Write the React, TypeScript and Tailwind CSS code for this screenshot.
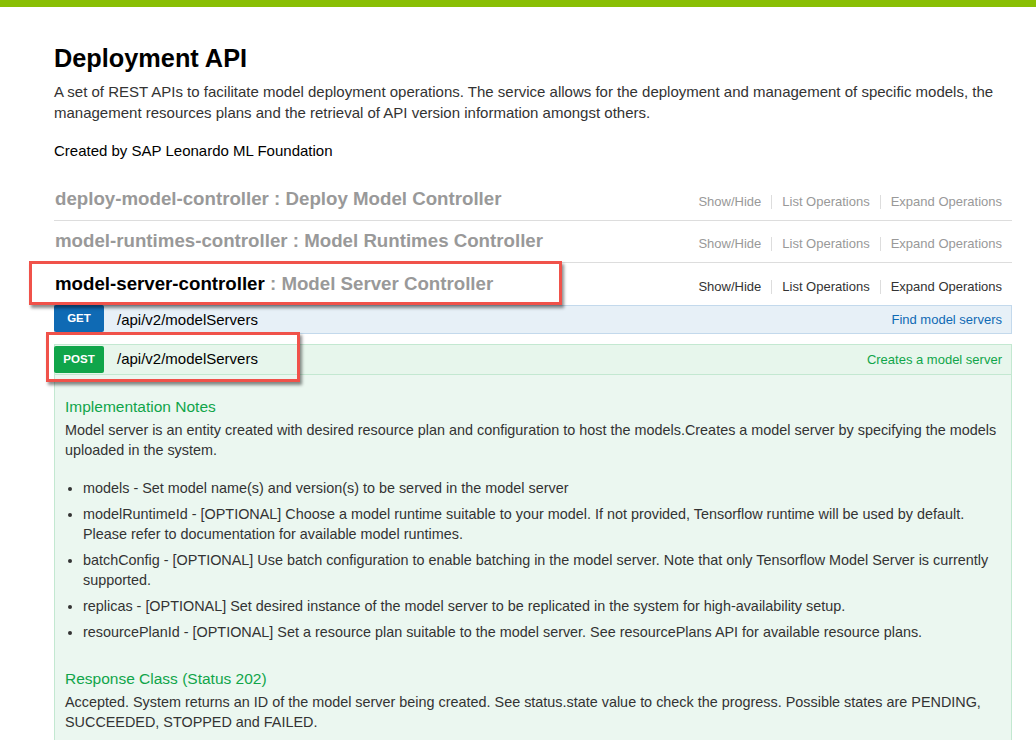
import React from "react";

const font = { fontFamily: '"Liberation Sans", Arial, Helvetica, sans-serif' };

function Links({ active }: { active?: boolean }) {
  const c = active ? "text-[#333]" : "text-[#999]";
  return (
    <div className={`flex items-center mt-[5px] text-[13px] pr-[10px] ${c}`}>
      <span className="px-[10px]">Show/Hide</span>
      <span className="w-px h-[14px] bg-[#ddd]" />
      <span className="px-[10px]">List Operations</span>
      <span className="w-px h-[14px] bg-[#ddd]" />
      <span className="pl-[10px]">Expand Operations</span>
    </div>
  );
}

function Controller({ name, desc, active, border = true }: { name: string; desc: string; active?: boolean; border?: boolean }) {
  return (
    <div className={`flex items-center justify-between h-[42px] ${border ? "border-b border-[#ddd]" : ""}`}>
      <div className="text-[18.7px] font-bold pl-px">
        <span className={active ? "text-black" : "text-[#999]"}>{name}</span>
        <span className="text-[#999]"> : {desc}</span>
      </div>
      <Links active={active} />
    </div>
  );
}

export default function App() {
  return (
    <div className="relative min-h-[740px] bg-white text-[#333]" style={font}>
      <div className="h-[7px] bg-[#89bf04]" />
      <div className="ml-[54px] w-[958px]">
        <h1 className="mt-[36px] text-[25.3px] leading-[30px] font-bold text-black">Deployment API</h1>
        <p className="mt-[8px] text-[15px] leading-[21px] text-[#333]">
          A set of REST APIs to facilitate model deployment operations. The service allows for the deployment and management of specific models, the management resources plans and the retrieval of API version information amongst others.
        </p>
        <p className="mt-[17px] text-[15px] leading-[21px] text-black">Created by SAP Leonardo ML Foundation</p>

        <div className="mt-[18px]">
          <Controller name="deploy-model-controller" desc="Deploy Model Controller" />
          <Controller name="model-runtimes-controller" desc="Model Runtimes Controller" />
          <Controller name="model-server-controller" desc="Model Server Controller" active border={false} />
        </div>

        {/* GET row */}
        <div className="flex items-start h-[29px] border border-[#c3d9ec] bg-[#e7f0f7]">
          <span className="-mt-px -ml-px w-[50px] h-[27px] flex items-center justify-center bg-[#0f6ab4] text-white text-[11.5px] font-bold rounded-[2px]">GET</span>
          <span className="ml-[13px] text-[15px] leading-[27px] text-black">/api/v2/modelServers</span>
          <span className="ml-auto pr-[9px] text-[13px] leading-[27px] text-[#0f6ab4]">Find model servers</span>
        </div>

        {/* POST row */}
        <div className="mt-[10px] flex items-center h-[31px] border border-[#c3e8d1] bg-[#e7f6ec]">
          <span className="-ml-px w-[50px] h-[27px] flex items-center justify-center bg-[#10a54a] text-white text-[11.5px] font-bold rounded-[2px]">POST</span>
          <span className="ml-[13px] text-[15px] text-black">/api/v2/modelServers</span>
          <span className="ml-auto pr-[9px] text-[13px] text-[#10a54a]">Creates a model server</span>
        </div>

        {/* Content */}
        <div className="border-x border-[#c3e8d1] bg-[#ebf7f0] px-[10px] pt-[22px] pb-[20px] text-[14.4px] leading-[20px] text-[#333]">
          <h4 className="text-[15.5px] leading-[20px] text-[#10a54a]">Implementation Notes</h4>
          <p className="mt-[3px]">
            Model server is an entity created with desired resource plan and configuration to host the models.Creates a model server by specifying the models uploaded in the system.
          </p>
          <ul className="mt-[18px] list-disc pl-[18px]">
            <li className="mb-[6px]">models - Set model name(s) and version(s) to be served in the model server</li>
            <li className="mb-[6px]">modelRuntimeId - [OPTIONAL] Choose a model runtime suitable to your model. If not provided, Tensorflow runtime will be used by default. Please refer to documentation for available model runtimes.</li>
            <li className="mb-[6px]">batchConfig - [OPTIONAL] Use batch configuration to enable batching in the model server. Note that only Tensorflow Model Server is currently supported.</li>
            <li className="mb-[6px]">replicas - [OPTIONAL] Set desired instance of the model server to be replicated in the system for high-availability setup.</li>
            <li>resourcePlanId - [OPTIONAL] Set a resource plan suitable to the model server. See resourcePlans API for available resource plans.</li>
          </ul>
          <h4 className="mt-[27px] text-[15.5px] leading-[20px] text-[#10a54a]">Response Class (Status 202)</h4>
          <p className="mt-[3px]">
            Accepted. System returns an ID of the model server being created. See status.state value to check the progress. Possible states are PENDING, SUCCEEDED, STOPPED and FAILED.
          </p>
        </div>
      </div>

      {/* annotation boxes */}
      <div className="absolute left-[29px] top-[261px] w-[533px] h-[44px] border-[3px] border-[#f0524a] shadow-[2px_3px_3px_rgba(0,0,0,0.45)]" />
      <div className="absolute left-[46px] top-[332px] w-[254px] h-[50px] border-[3px] border-[#f0524a] shadow-[2px_3px_3px_rgba(0,0,0,0.45)]" />
    </div>
  );
}
